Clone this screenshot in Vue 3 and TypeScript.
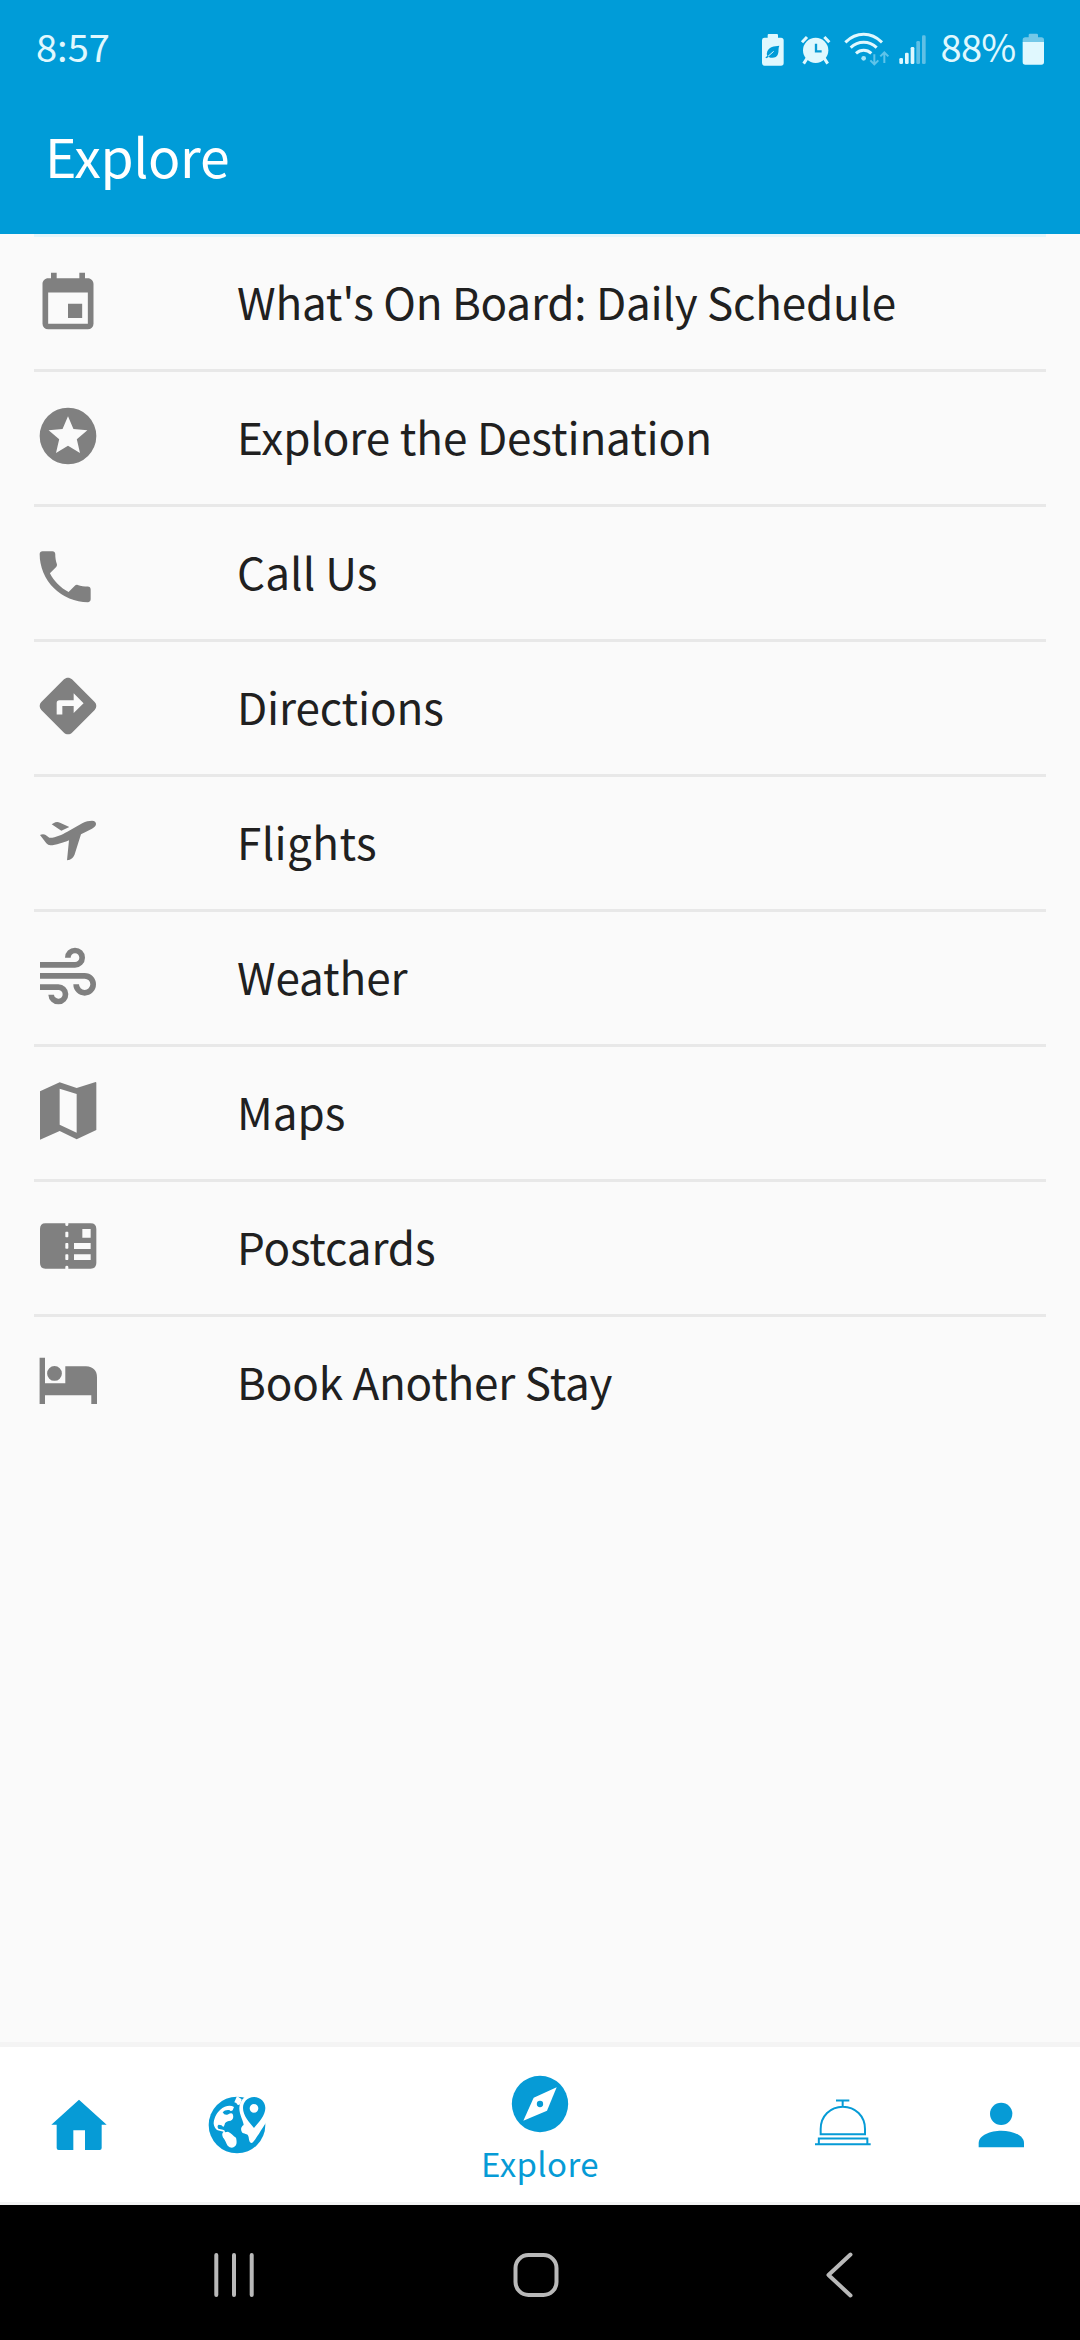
<script setup lang="ts">
interface MenuItem {
  label: string
  viewBox: string
  path: string
  tracking: number
}

const items: MenuItem[] = [
  {
    label: "What's On Board: Daily Schedule",
    tracking: -0.22,
    viewBox: '0 0 24 24',
    path: 'M19 20H5V9H19M16 2V4H8V2H6V4H5C3.89 4 3 4.89 3 6V20A2 2 0 0 0 5 22H19A2 2 0 0 0 21 20V6C21 4.89 20.1 4 19 4H18V2M17 13H12V18H17V13Z',
  },
  {
    label: 'Explore the Destination',
    tracking: -0.1,
    viewBox: '0 0 24 24',
    path: 'M12 2A10 10 0 1 0 12 22A10 10 0 1 0 12 2M16.23 18L12 15.45L7.77 18L8.89 13.19L5.16 9.96L10.08 9.54L12 5L13.92 9.53L18.84 9.95L15.11 13.18L16.23 18Z',
  },
  {
    label: 'Call Us',
    tracking: 0.1,
    viewBox: '0 0 24 24',
    path: 'M5.62 12.79C7.06 15.62 9.38 17.93 12.21 19.38L14.41 17.18C14.69 16.9 15.08 16.82 15.43 16.93C16.55 17.3 17.75 17.5 19 17.5C19.6 17.5 20 17.9 20 18.5V22C20 22.6 19.6 23 19 23A17 17 0 0 1 2 6C2 5.4 2.4 5 3 5H6.5C7.1 5 7.5 5.4 7.5 6C7.5 7.25 7.7 8.45 8.07 9.57C8.18 9.92 8.1 10.31 7.82 10.59Z',
  },
  {
    label: 'Directions',
    tracking: -0.15,
    viewBox: '0 0 24 24',
    path: 'M21.41 10.59L13.41 2.59C12.63 1.8 11.37 1.8 10.59 2.59L2.59 10.59C1.8 11.37 1.8 12.63 2.59 13.41L10.59 21.41C11.37 22.2 12.63 22.2 13.41 21.41L21.41 13.41C22.2 12.63 22.2 11.37 21.41 10.59M14 14.5V12H10V15H8V11A1 1 0 0 1 9 10H14V7.5L17.5 11Z',
  },
  {
    label: 'Flights',
    tracking: 0.4,
    viewBox: '102 51 204 204',
    path: 'M120 135C125 132 133 132 137 135L148 143C166 144 185 134 202 125L248 99C257 94 267 92 276 92C284 92 289 97 288 103C287 109 282 113 276 116L243 133L225 190C222 202 213 211 201 211L207 151C190 158 168 166 151 166C146 166 143 164 139 160ZM155 103L166 97Q173 95 180 98L208 111L184 122Z',
  },
  {
    label: 'Weather',
    tracking: -0.1,
    viewBox: '102 456 204 204',
    path: 'M120 516H225A13 13 0 1 0 212 503H195A30 30 0 1 1 225 533H120ZM120 549H254A34 34 0 1 1 220 583H237A17 17 0 1 0 254 566H120ZM120 583H174A30 30 0 1 1 145 614H162A13 13 0 1 0 174 600H120Z',
  },
  {
    label: 'Maps',
    tracking: 0,
    viewBox: '102 51 204 204',
    path: 'M120 94L179 67L230 84L287 66Q289 66 289 69V210L230 238L179 213L120 239ZM179 86V194L230 218V102Z',
  },
  {
    label: 'Postcards',
    tracking: -0.2,
    viewBox: '102 456 204 204',
    path: 'M136 490H196V494Q196 498 200.500 498Q205 498 205 494V490H272Q289 490 289 507V609Q289 626 272 626H205V621Q205 617 200.500 617Q196 617 196 621V626H136Q120 626 120 609V507Q120 490 136 490ZM198 515Q196 515 196 518V529Q196 532 198 532H203Q205 532 205 529V518Q205 515 203 515ZM198 549Q196 549 196 552V563Q196 566 198 566H203Q205 566 205 563V552Q205 549 203 549ZM198 583Q196 583 196 586V597Q196 600 198 600H203Q205 600 205 597V586Q205 583 203 583ZM247 507V533H272V507ZM222 549V567H272V549ZM222 583V600H272V583Z',
  },
  {
    label: 'Book Another Stay',
    tracking: -0.2,
    viewBox: '34 1347 68 68',
    path: 'M39.600 1357.700H45V1383.300H65.300V1366.300H86Q97 1367 97 1377.500V1404H91.300V1395.200H45V1404H39.600ZM54.500 1366A7.400 7.400 0 1 0 54.500 1380.800A7.400 7.400 0 1 0 54.500 1366Z',
  },
]
</script>

<template>
  <div class="screen">
    <header class="header">
      <div class="status">
        <span class="clock">8:57</span>
        <div class="indicators">
          <svg width="36" height="38" viewBox="60 60 108 114">
            <path fill-rule="evenodd" fill="currentColor" d="M86 72H111Q114 72 114 76V83H123Q131 83 131 91V159Q131 167 123 167H74Q66 167 66 159V91Q66 83 74 83H83V76Q83 72 86 72ZM118 107C102 108 87 111 82 124Q79 131 82 138L76 142L79 145L86 141C97 146 110 144 114 132C117 123 114 115 118 107Z" />
            <path d="M84 139L101 124" stroke="#e0f8fe" stroke-width="3" />
          </svg>
          <svg width="44" height="38" viewBox="168 60 132 114">
            <circle cx="227" cy="121" r="38" fill="currentColor" />
            <path d="M186 97L201 81M253 81L268 97" stroke="currentColor" stroke-width="9" />
            <path d="M201 145L191 161M253 145L263 161" stroke="currentColor" stroke-width="9" />
            <path d="M228 101V124H245" fill="none" stroke="#0a9ad3" stroke-width="7" />
          </svg>
          <svg width="55" height="38" viewBox="300 60 165 114">
            <g fill="none" stroke="currentColor" stroke-width="9">
              <path d="M316 97Q341 73 371 73Q401 73 426 97" />
              <path d="M332 113Q349 97 371 97Q393 97 410 113" />
              <path d="M348 130Q358 121 371 121Q384 121 394 130" />
            </g>
            <circle cx="371" cy="145" r="7" fill="#a4e4f8" />
            <g fill="none" stroke="#5fc4ea" stroke-width="6">
              <path d="M403 133V162M391 151L403 163L415 151" />
              <path d="M433 159V128M421 139L433 127L445 139" />
            </g>
          </svg>
          <svg width="41" height="38" viewBox="465 60 123 114">
            <g fill="currentColor">
              <rect x="478" y="144" width="11" height="18" rx="4" />
              <rect x="495" y="128" width="11" height="34" rx="4" />
              <rect x="512" y="111" width="11" height="51" rx="4" />
            </g>
            <g fill="#5fc0e6">
              <rect x="529" y="93" width="11" height="69" rx="4" />
              <rect x="546" y="76" width="11" height="86" rx="4" />
            </g>
          </svg>
          <span class="percent">88%</span>
          <svg width="30" height="38" viewBox="840 60 90 114">
            <path fill="#73c8e8" d="M870 71H890Q894 71 894 75V82H904Q912 82 912 90V97H848V90Q848 82 856 82H866V75Q866 71 870 71Z" />
            <path fill="currentColor" d="M848 96H912V156Q912 164 904 164H856Q848 164 848 156Z" />
          </svg>
        </div>
      </div>
      <h1 class="title">Explore</h1>
    </header>

    <main class="content">
      <ul class="menu">
        <li v-for="item in items" :key="item.label" class="row">
          <svg class="row-icon" :viewBox="item.viewBox">
            <path fill-rule="evenodd" :d="item.path" />
          </svg>
          <span class="row-label" :style="{ letterSpacing: `${item.tracking}px` }">{{ item.label }}</span>
        </li>
      </ul>
    </main>

    <nav class="tabs">
      <a class="tab">
        <svg viewBox="135 186 204 204">
          <path fill="currentColor" d="M237 212L320 287H305V357Q305 363 299 363H255V304H220V363H176Q170 363 170 357V287H154Z" />
        </svg>
      </a>
      <a class="tab">
        <svg viewBox="609 186 204 204">
          <circle cx="711" cy="288" r="85" fill="currentColor" />
          <g fill="#fff">
            <path d="M702 234C690 227 674 231 660 243C648 254 641 271 641 284C642 292 646 300 653 304Q662 307 671 308C664 313 667 322 671 328C676 334 678 343 683 350C690 357 699 358 705 352C712 346 710 334 708 326C699 320 694 312 684 308L675 310Q675 303 669 302L655 299Q650 291 656 287Q666 287 670 294Q674 289 675 283Q680 275 692 275Q702 270 699 257Q695 249 685 256Q674 261 668 250Q675 241 688 243Q692 249 698 244Z" />
            <path d="M711 201L725 211L721 225Q713 232 709 222L703 220Z" />
            <path d="M762 194C739 194 718 213 718 238C718 258 730 275 731 288C722 293 721 304 727 311C736 316 745 313 746 325C747 340 753 347 760 338C767 331 771 321 777 314C784 302 794 289 803 271L815 225L790 194Z" />
          </g>
          <path fill="currentColor" fill-rule="evenodd" d="M762 204C742 204 729 219 729 237C729 260 748 280 762 297C776 280 796 260 796 237C796 219 782 204 762 204ZM762 225A13 13 0 1 1 762 251A13 13 0 1 1 762 225Z" />
        </svg>
      </a>
      <a class="tab tab-active">
        <svg viewBox="198 120 204 204">
          <circle cx="300" cy="222" r="84.500" fill="currentColor" />
          <path fill="#fff" d="M350 172L321 242L250 272L281 203Z" />
          <circle cx="300" cy="222" r="9.500" fill="currentColor" />
        </svg>
        <span>Explore</span>
      </a>
      <a class="tab">
        <svg viewBox="87 186 204 204">
          <g fill="none" stroke="currentColor" stroke-width="6">
            <path d="M168 214.500H208M188 214V232M122 316V300C122 261 151 233 188.500 233S255 261 255 300V316ZM116.500 344V328.500H262V344M105 346H272" />
          </g>
        </svg>
      </a>
      <a class="tab">
        <svg viewBox="561 186 204 204">
          <circle cx="663.500" cy="254.500" r="33.500" fill="currentColor" />
          <path fill="currentColor" d="M596 355V342C596 318 632 305 664 305S732 318 732 342V355Z" />
        </svg>
      </a>
    </nav>

    <footer class="system">
      <svg width="48" height="48" viewBox="0 0 48 48">
        <path d="M6.300 4V44M24 4V44M41.700 4V44" />
      </svg>
      <svg width="48" height="48" viewBox="0 0 48 48">
        <rect x="2.500" y="4" width="41" height="40" rx="13" />
      </svg>
      <svg width="48" height="48" viewBox="0 0 48 48">
        <path d="M34.500 3.500L12.500 24L34.500 44.500" />
      </svg>
    </footer>
  </div>
</template>

<style>
body {
  margin: 0;
}
</style>

<style scoped>
.screen {
  width: 1080px;
  height: 2340px;
  display: flex;
  flex-direction: column;
  background: #fafafa;
  color: #202020;
  font-family: "Noto Sans CJK JP", "Noto Sans", sans-serif;
  overflow: hidden;
}
.header {
  height: 234px;
  background: #009cd8;
  color: #fff;
}
.status {
  display: flex;
  justify-content: space-between;
  height: 98px;
  padding: 0 30px 0 36px;
  color: #e0f8fe;
}
.clock,
.percent {
  font-size: 38px;
  line-height: 92px;
  height: 98px;
}
.indicators {
  display: flex;
  align-items: center;
}
.percent {
  width: 84px;
  text-align: center;
  white-space: nowrap;
  letter-spacing: -0.8px;
}
.title {
  margin: 0;
  padding-left: 45px;
  font-size: 53.5px;
  font-weight: 400;
  letter-spacing: -0.4px;
  line-height: 113px;
}
.content {
  flex: 1;
}
.menu {
  margin: 0;
  padding: 0 34px;
  list-style: none;
}
.row {
  display: flex;
  align-items: center;
  height: 132px;
  border-top: 3px solid #e8e8e8;
}
.row:first-child {
  border-top-color: #e3f5fb;
}
.row-icon {
  flex: none;
  width: 68px;
  height: 68px;
  margin: 0 135px 4px 0;
  fill: #808080;
}
.row-label {
  margin-bottom: 5px;
  font-size: 44px;
  line-height: 66px;
  white-space: nowrap;
}
.tabs {
  display: grid;
  grid-template-columns: 158px 158px 1fr 158px 158px;
  height: 155px;
  border-top: 5px solid #f4f4f4;
  border-bottom: 3px solid #f3f4f4;
  background: #fff;
  color: #069bd6;
}
.tab {
  display: flex;
  flex-direction: column;
  align-items: center;
  justify-content: center;
}
.tab svg {
  width: 68px;
  height: 68px;
}
.tab-active {
  justify-content: flex-start;
  padding-top: 23px;
}
.tab-active span {
  font-size: 33px;
  line-height: 50px;
  letter-spacing: 0.4px;
}
.system {
  display: flex;
  justify-content: space-between;
  align-items: center;
  height: 135px;
  padding: 0 216px 0 210px;
  background: #000;
}
.system svg {
  fill: none;
  stroke: #b9b9b9;
  stroke-width: 4;
  stroke-linecap: round;
  stroke-linejoin: round;
  margin-top: 4px;
}
</style>
